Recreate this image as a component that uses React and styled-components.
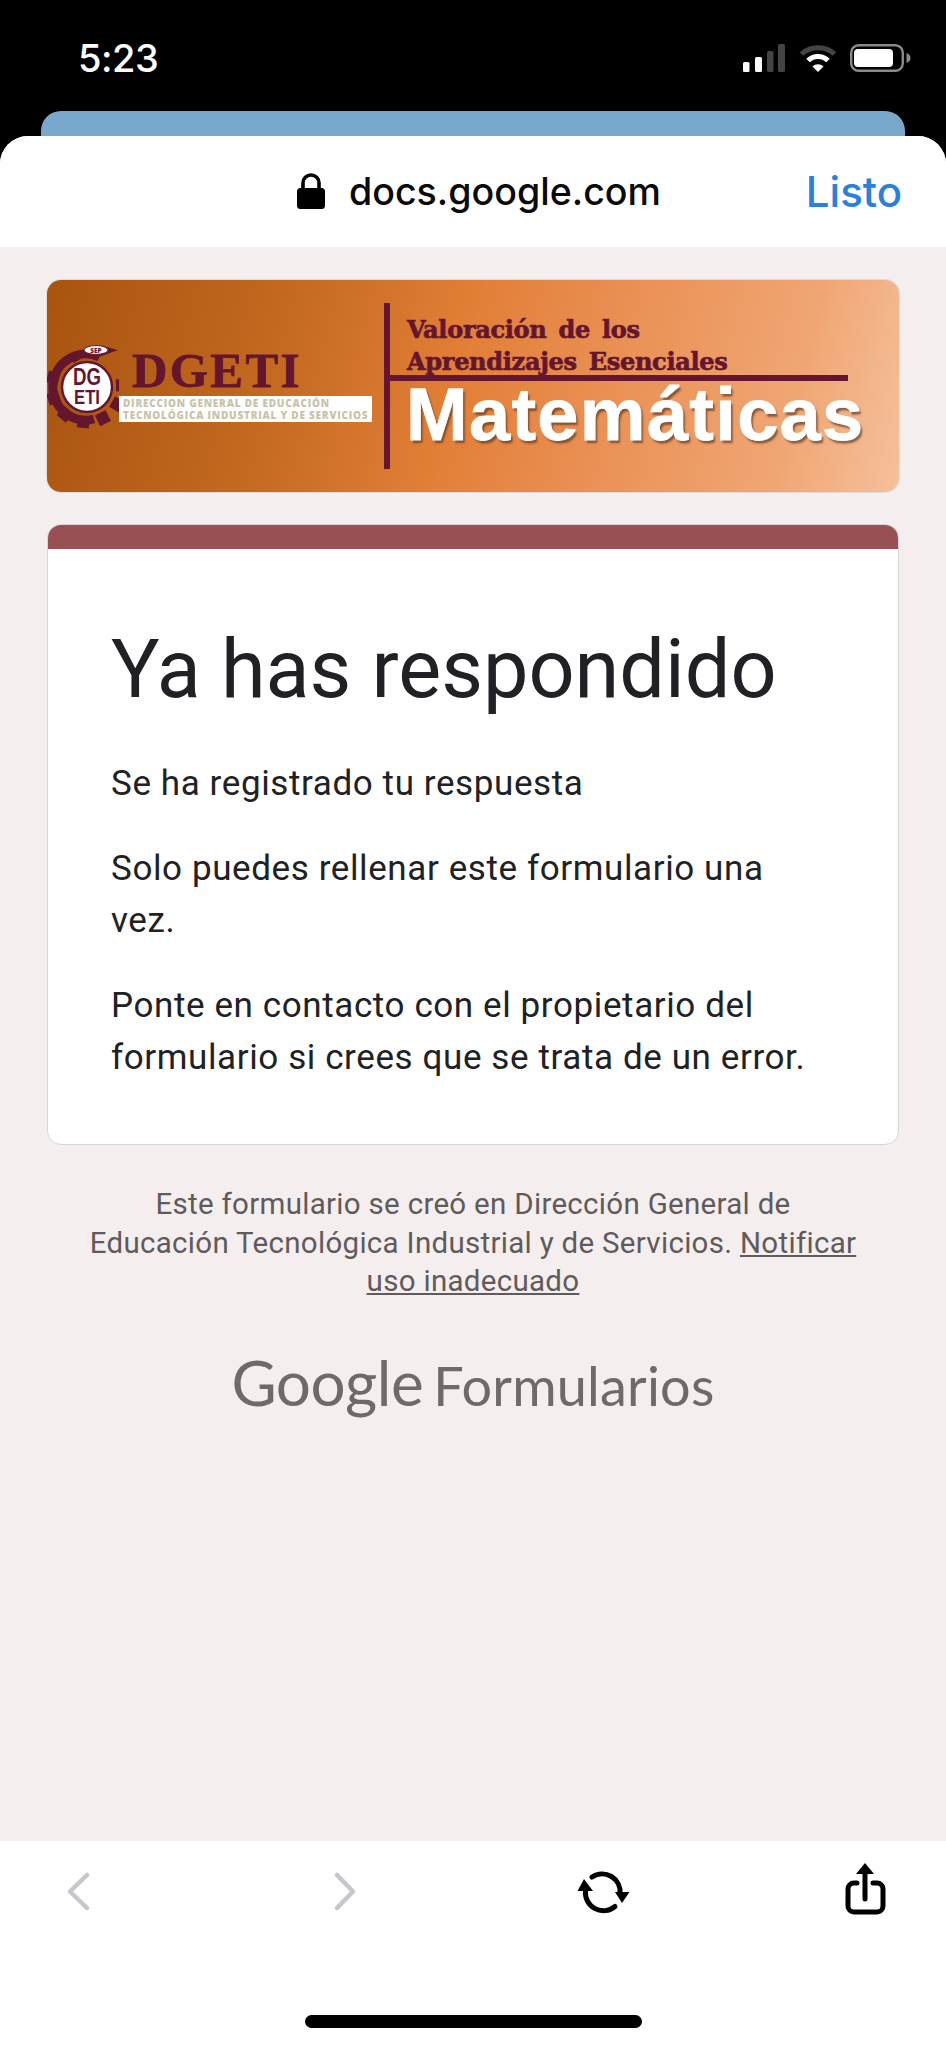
import React from "react";
import styled, { createGlobalStyle } from "styled-components";

const Global = createGlobalStyle`
  html, body { margin: 0; padding: 0; background: #000; }
  #root { width: 946px; height: 2048px; }
  * { box-sizing: border-box; }
`;
const Phone = styled.div`
  width: 946px; height: 2048px; background: #000; display: flex; flex-direction: column; overflow: hidden;
  font-family: Roboto, sans-serif;
`;
const StatusBar = styled.div`
  height: 111px; flex: none; display: flex; align-items: flex-start; justify-content: space-between;
  padding: 38px 35px 0 78px; color: #fff;
`;
const Time = styled.div`
  font: 500 38px/41px Inter, sans-serif; letter-spacing: -0.5px;
`;
const StatusIcons = styled.div`
  display: flex; align-items: center; gap: 13px; margin-top: 6px;
`;
const BackSheet = styled.div`
  height: 25px; margin: 0 41px; background: #78a9cc; border-radius: 20px 20px 0 0; flex: none;
`;
const Sheet = styled.div`
  flex: 1; display: flex; flex-direction: column; background: #fff; border-radius: 28px 28px 0 0; overflow: hidden;
`;
const UrlBar = styled.header`
  height: 111px; flex: none; display: flex; align-items: center; padding: 0 44px 0 296px; background: #fff;
`;
const Url = styled.div`
  font: 500 37.6px/44px Inter, sans-serif; color: #0a0a0a; margin-left: 23px; flex: 1;
`;
const Done = styled.div`
  font: 500 42px/44px Inter, sans-serif; color: #2a80dd;
`;
const Page = styled.main`
  flex: 1; background: #f4eeee; padding: 33px 47px 0;
`;
const Banner = styled.div`
  height: 212px; border-radius: 14px; display: flex; align-items: flex-start; padding: 23px 0 0 0;
  background: linear-gradient(104deg, #a8540f 0%, #c2681f 26%, #e27f37 48%, #ea9156 66%, #f0a673 86%, #f5c09c 100%);
  box-shadow: 0 0 0 1px #e3dcdc;
`;
const LogoBlock = styled.div`
  width: 337px; flex: none; display: flex; padding-top: 40px;
`;
const Gear = styled.svg`
  width: 72px; height: 86px; flex: none;
`;
const Dgeti = styled.div`
  margin-top: 7px; display: flex; flex-direction: column;
`;
const DgetiName = styled.div`
  font: 700 49px/42px "Liberation Serif", serif; color: #65162f; letter-spacing: 2.4px; margin-left: 13px;
  -webkit-text-stroke: 0.8px #65162f;
`;
const DgetiSub = styled.div`
  width: 253px; height: 26px; background: #fff; font: 800 10px/12px "Open Sans", sans-serif; color: #c8c3a8;
  padding: 1px 4px; white-space: nowrap; letter-spacing: 0.78px; margin-top: 4px;
`;
const TitleBlock = styled.div`
  height: 166px; border-left: 6px solid #65162f; width: 464px; flex: none; display: flex; flex-direction: column;
`;
const Subtitle = styled.div`
  font: 700 24px/32px "DejaVu Serif", serif; color: #65162f; margin-left: 17px; letter-spacing: -0.3px; word-spacing: 4px;
  white-space: nowrap; -webkit-text-stroke: 0.7px #65162f;
  margin-top: ${(p) => p.$top || 0}px;
`;
const Rule = styled.div`
  height: 6px; background: #65162f; flex: none; margin-top: -3px; width: 458px;
`;
const Subject = styled.div`
  font: 700 74px/74px "Liberation Sans", sans-serif; color: #fff; margin-left: 16px; white-space: nowrap; letter-spacing: 1.3px;
  -webkit-text-stroke: 0.8px #fff;
  text-shadow: 2px 3px 2px rgba(80, 50, 30, 0.65);
  margin-top: -3px;
`;
const Card = styled.section`
  margin-top: 32px; height: 621px; background: #fff; border-radius: 14px; border: 1px solid #d9d6d8;
  overflow: hidden; display: flex; flex-direction: column;
`;
const Accent = styled.div`
  height: 25px; flex: none; background: #985055; margin: -1px;
`;
const CardBody = styled.div`
  padding: 78px 70px 0 63px;
`;
const Title = styled.h1`
  margin: 0 0 44px; font: 400 81px/88px Roboto, sans-serif; color: #202124; white-space: nowrap;
`;
const Para = styled.p`
  margin: 0 0 33px; font: 400 35px/52px Roboto, sans-serif; letter-spacing: 0.6px; color: #202124;
`;
const Legal = styled.div`
  margin: 40px 37px 0; text-align: center; font: 400 29.5px/38.5px Roboto, sans-serif;
  letter-spacing: 0.3px; color: #5f5b5b;
`;
const Abuse = styled.span`
  text-decoration: underline;
`;
const Brand = styled.div`
  margin-top: 43px; display: flex; justify-content: center; align-items: baseline; color: #6f6a6a;
`;
const BrandGoogle = styled.span`
  font: 400 62px/76px Lato, sans-serif; margin-right: 10px; letter-spacing: -0.5px;
`;
const BrandProduct = styled.span`
  font: 400 54px/76px Lato, sans-serif; letter-spacing: 0.2px;
`;
const Toolbar = styled.footer`
  height: 207px; flex: none; background: #fff; display: flex; flex-direction: column;
`;
const ToolRow = styled.div`
  display: grid; grid-template-columns: 267px 260px 260px 60px; padding: 14px 0 0 48px; height: 174px; align-items: start;
`;
const ToolButton = styled.div`
  width: 60px; height: 60px; display: flex; justify-content: center; align-items: center;
`;
const HomeBar = styled.div`
  width: 337px; height: 13px; background: #000; border-radius: 7px; margin: 0 auto;
`;

const teeth = [-75, -108, -141, -174, 153, 120, 87];

export default function App() {
  return (
    <Phone>
      <Global />
      <StatusBar>
        <Time>5:23</Time>
        <StatusIcons>
          <svg width="43" height="28" viewBox="0 0 43 28">
            <rect x="0" y="18" width="6.5" height="10" rx="1.5" fill="#fff" />
            <rect x="12" y="13" width="7" height="15" rx="1.5" fill="#fff" />
            <rect x="24" y="7" width="6.5" height="21" rx="1.5" fill="#444" />
            <rect x="35" y="0" width="7" height="28" rx="1.5" fill="#444" />
          </svg>
          <svg width="38" height="28" viewBox="0 0 38 28">
            <path d="M2.5 10 C11 1.5 27 1.5 35.5 10" fill="none" stroke="#444" strokeWidth="5" />
            <path d="M9 16.5 C14.5 11 23.5 11 29 16.5" fill="none" stroke="#fff" strokeWidth="5" />
            <path d="M19 28 L13.5 22.5 C16.5 19.5 21.5 19.5 24.5 22.5 Z" fill="#fff" />
          </svg>
          <svg width="61" height="28" viewBox="0 0 61 28">
            <rect x="1.2" y="1.2" width="51.6" height="25.6" rx="7.5" fill="none" stroke="#8a8a8a" strokeWidth="2.4" />
            <rect x="4" y="5" width="39" height="18" rx="4" fill="#fff" />
            <path d="M56.5 9 C59.5 10 60.5 12 60.5 14 C60.5 16 59.5 18 56.5 19 Z" fill="#8a8a8a" />
          </svg>
        </StatusIcons>
      </StatusBar>
      <BackSheet />
      <Sheet>
        <UrlBar>
          <svg width="30" height="37" viewBox="0 0 30 37">
            <path d="M7 17 V10 a8 8 0 0 1 16 0 V17" fill="none" stroke="#000" strokeWidth="3.6" />
            <rect x="1" y="15" width="28" height="21" rx="3.5" fill="#000" />
          </svg>
          <Url>docs.google.com</Url>
          <Done>Listo</Done>
        </UrlBar>
        <Page>
          <Banner>
            <LogoBlock>
              <Gear viewBox="0 0 72 86">
                <g fill="#65162f">
                  {teeth.map((a) => (
                    <rect key={a} x="-6" y="-41" width="12" height="12" transform={`translate(40 44) rotate(${a})`} />
                  ))}
                </g>
                <path d="M52.4 14 A33 33 0 1 0 47 76" fill="none" stroke="#65162f" strokeWidth="9" />
                <path d="M22 15 L38 6 L52 6 L52 2 L71 7 L52 14 L52 11 L40 12 L27 20 Z" fill="#65162f" />
                <ellipse cx="49" cy="7" rx="12" ry="4.4" fill="#fff" stroke="#65162f" strokeWidth="1" />
                <text x="49" y="9.5" fontSize="6.5" fontWeight="800" fontFamily="Open Sans" textAnchor="middle" fill="#65162f">SEP</text>
                <circle cx="40" cy="44" r="25" fill="#fff" stroke="#65162f" strokeWidth="2.5" />
                <text x="26" y="42" fontSize="23" fontWeight="700" fontFamily="Liberation Sans" textLength="28" lengthAdjust="spacingAndGlyphs" fill="#65162f">DG</text>
                <text x="27" y="61" fontSize="20" fontWeight="700" fontFamily="Liberation Sans" textLength="26" lengthAdjust="spacingAndGlyphs" fill="#65162f">ETI</text>
              </Gear>
              <Dgeti>
                <DgetiName>DGETI</DgetiName>
                <DgetiSub>
                  DIRECCION GENERAL DE EDUCACIÓN
                  <br />
                  TECNOLÓGICA INDUSTRIAL Y DE SERVICIOS
                </DgetiSub>
              </Dgeti>
            </LogoBlock>
            <TitleBlock>
              <Subtitle $top={11}>Valoración de los</Subtitle>
              <Subtitle>Aprendizajes Esenciales</Subtitle>
              <Rule />
              <Subject>Matemáticas</Subject>
            </TitleBlock>
          </Banner>
          <Card>
            <Accent />
            <CardBody>
              <Title>Ya has respondido</Title>
              <Para>Se ha registrado tu respuesta</Para>
              <Para>Solo puedes rellenar este formulario una vez.</Para>
              <Para>Ponte en contacto con el propietario del formulario si crees que se trata de un error.</Para>
            </CardBody>
          </Card>
          <Legal>
            Este formulario se creó en Dirección General de Educación Tecnológica Industrial y de Servicios.{" "}
            <Abuse>Notificar uso inadecuado</Abuse>
          </Legal>
          <Brand>
            <BrandGoogle>Google</BrandGoogle>
            <BrandProduct>Formularios</BrandProduct>
          </Brand>
        </Page>
        <Toolbar>
          <ToolRow>
            <ToolButton>
              <svg width="60" height="60" viewBox="0 5 60 60">
                <path d="M39 25 L22 41.5 L39 58" fill="none" stroke="#c6c7cc" strokeWidth="4.5" strokeLinecap="round" strokeLinejoin="round" />
              </svg>
            </ToolButton>
            <ToolButton>
              <svg width="60" height="60" viewBox="0 5 60 60">
                <path d="M22 25 L38 41.5 L22 58" fill="none" stroke="#c6c7cc" strokeWidth="4.5" strokeLinecap="round" strokeLinejoin="round" />
              </svg>
            </ToolButton>
            <ToolButton>
              <svg width="60" height="60" viewBox="15 5 60 60">
                <path d="M32 27 A18 18 0 0 1 60 44" fill="none" stroke="#000" strokeWidth="5" strokeLinecap="round" />
                <path d="M55 56.5 A18 18 0 0 1 25.5 41" fill="none" stroke="#000" strokeWidth="5" strokeLinecap="round" />
                <path d="M24 29 L17.5 41 H33 Z M62 53 L55 42 H69.5 Z" fill="#000" />
              </svg>
            </ToolButton>
            <ToolButton>
              <svg width="60" height="60" viewBox="5 5 60 60">
                <path d="M27 33 H24 a6 6 0 0 0 -6 6 V56 a6 6 0 0 0 6 6 H47 a6 6 0 0 0 6 -6 V39 a6 6 0 0 0 -6 -6 H43" fill="none" stroke="#000" strokeWidth="5" strokeLinecap="round" />
                <path d="M35 20 V49" stroke="#000" strokeWidth="5" strokeLinecap="round" />
                <path d="M35 13 L44 24 H26 Z" fill="#000" />
              </svg>
            </ToolButton>
          </ToolRow>
          <HomeBar />
        </Toolbar>
      </Sheet>
    </Phone>
  );
}
